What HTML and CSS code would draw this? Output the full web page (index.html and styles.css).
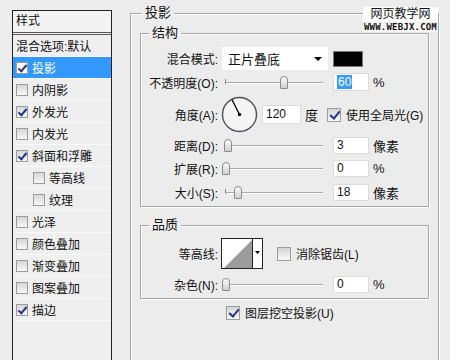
FILE: index.html
```html
<!DOCTYPE html>
<html lang="zh-CN">
<head>
<meta charset="UTF-8" />
<title>图层样式 - 投影</title>
<link rel="stylesheet" href="styles.css">
</head>
<body>

<div class="dialog">
  <!-- Style list -->
  <div class="styles">
    <div class="styles-head">样式</div>
    <ul class="style-list">
      <li>混合选项:默认</li>
      <li class="active"><span class="cb on"></span>投影</li>
      <li><span class="cb"></span>内阴影</li>
      <li><span class="cb on"></span>外发光</li>
      <li><span class="cb"></span>内发光</li>
      <li><span class="cb on"></span>斜面和浮雕</li>
      <li class="sub"><span class="cb"></span>等高线</li>
      <li class="sub"><span class="cb"></span>纹理</li>
      <li><span class="cb"></span>光泽</li>
      <li><span class="cb"></span>颜色叠加</li>
      <li><span class="cb"></span>渐变叠加</li>
      <li><span class="cb"></span>图案叠加</li>
      <li><span class="cb on"></span>描边</li>
    </ul>
  </div>

  <!-- Drop shadow settings -->
  <fieldset class="group">
    <legend>投影</legend>

    <fieldset class="box">
      <legend>结构</legend>
      <div class="row r-blend">
        <span class="lbl">混合模式:</span>
        <div class="select">正片叠底<span class="arrow"></span></div>
        <span class="swatch"></span>
      </div>
      <div class="row r-opacity">
        <span class="lbl">不透明度(O):</span>
        <div class="slider"><span class="thumb" style="left:59px"></span></div>
        <span class="num tall"><span class="sel">60</span></span>
        <span class="unit">%</span>
      </div>
      <div class="row r-angle">
        <span class="lbl">角度(A):</span>
        <svg class="dial" width="37" height="37" viewBox="0 0 37 37">
          <circle cx="18.5" cy="18.5" r="17" fill="#f5f5f7" stroke="#50505c" stroke-width="1.4"/>
          <line x1="18.5" y1="18.5" x2="11" y2="3.6" stroke="#000" stroke-width="1.3"/>
          <circle cx="18.5" cy="18.5" r="1.7" fill="#000"/>
        </svg>
        <span class="num angle">120</span>
        <span class="unit">度</span>
        <span class="cb big on global"></span>
        <span class="cb-text">使用全局光(G)</span>
      </div>
      <div class="row r-dist">
        <span class="lbl">距离(D):</span>
        <div class="slider"><span class="thumb" style="left:3px"></span></div>
        <span class="num">3</span>
        <span class="unit">像素</span>
      </div>
      <div class="row r-spread">
        <span class="lbl">扩展(R):</span>
        <div class="slider"><span class="thumb" style="left:1px"></span></div>
        <span class="num">0</span>
        <span class="unit">%</span>
      </div>
      <div class="row r-size">
        <span class="lbl">大小(S):</span>
        <div class="slider"><span class="thumb" style="left:13px"></span></div>
        <span class="num">18</span>
        <span class="unit">像素</span>
      </div>
    </fieldset>

    <fieldset class="box quality">
      <legend>品质</legend>
      <div class="row r-contour">
        <span class="lbl">等高线:</span>
        <svg class="contour" width="42" height="31" viewBox="0 0 42 31">
          <rect x="0.5" y="0.5" width="41" height="30" fill="#fff" stroke="#222"/>
          <polygon points="3,30 31,2 31,30" fill="#9c9c9c"/>
          <line x1="31.5" y1="0" x2="31.5" y2="31" stroke="#222"/>
          <polygon points="34,13 39,13 36.5,16" fill="#000"/>
        </svg>
        <span class="cb big aa"></span>
        <span class="cb-text">消除锯齿(L)</span>
      </div>
      <div class="row r-noise">
        <span class="lbl">杂色(N):</span>
        <div class="slider"><span class="thumb" style="left:1px"></span></div>
        <span class="num">0</span>
        <span class="unit">%</span>
      </div>
    </fieldset>

    <div class="knockout">
      <span class="cb big on"></span>
      <span class="cb-text">图层挖空投影(U)</span>
    </div>
  </fieldset>

  <!-- Watermark -->
  <div class="mark">
    <div class="mark-cn">网页教学网</div>
    <div class="mark-en">WWW.WEBJX.COM</div>
  </div>
</div>

</body>
</html>
```

FILE: styles.css
```css
:root {
  --line: #a6a6a6;
  --bg: #ececec;
}
body {
  margin: 0;
  background: var(--bg);
  font-family: "Liberation Sans", "Noto Sans CJK SC", sans-serif;
  font-size: 12px;
  color: #111;
}
.dialog {
  position: relative;
  display: flex;
  align-items: flex-start;
  height: 360px;
  overflow: hidden;
}

/* left style list */
.styles {
  margin: 10px 0 0 12px;
  width: 98px;
  height: 400px;
  border: 1px solid #222;
  background: #efefef;
  flex: none;
}
.styles-head {
  height: 21px;
  line-height: 21px;
  padding-left: 3px;
  background: #f3f3f3;
  border-bottom: 3px double #555;
}
.style-list {
  list-style: none;
  margin: 0;
  padding: 0;
}
.style-list li {
  display: flex;
  align-items: center;
  height: 21px;
  padding-left: 3px;
  border-bottom: 1px solid #fafafa;
  white-space: nowrap;
}
.style-list li.sub {
  padding-left: 20px;
}
.style-list li.active {
  background: #3399ff;
  color: #fff;
}

/* checkboxes */
.cb {
  position: relative;
  flex: none;
  width: 10px;
  height: 10px;
  margin-right: 4px;
  border: 1px solid #9c9c9c;
  background: linear-gradient(#d6d6d6, #f8f8f8);
}
.active .cb {
  background: #fff;
}
.cb.on::after {
  content: "";
  position: absolute;
  left: 3px;
  top: 0;
  width: 3px;
  height: 7px;
  border: solid #25338a;
  border-width: 0 2px 2px 0;
  transform: rotate(40deg);
}
.cb.big {
  width: 12px;
  height: 12px;
  margin-right: 5px;
}
.cb.big.on::after {
  left: 4px;
  top: 0;
  width: 4px;
  height: 8px;
}
.cb-text {
  white-space: nowrap;
}

/* group boxes */
.group {
  margin: 5px 0 0 18px;
  padding: 4px 9px 0 9px;
  width: 289px;
  height: 420px;
  min-width: 0;
  border: 1px solid var(--line);
  box-shadow: inset 1px 1px 0 #fff, 1px 1px 0 #fff;
  flex: none;
}
.group > legend {
  margin-left: 2px;
  padding: 0 3px;
  line-height: 16px;
  font-size: 13px;
}
.box {
  margin: 0;
  padding: 0 0 5px 0;
  min-width: 0;
  border: 1px solid var(--line);
  box-shadow: inset 1px 1px 0 #fff, 1px 1px 0 #fff;
}
.box > legend {
  margin-left: 8px;
  padding: 0 3px;
  line-height: 16px;
  font-size: 13px;
}
.quality {
  margin-top: 10px;
}

/* rows */
.row {
  display: flex;
  align-items: center;
  white-space: nowrap;
}
.lbl {
  flex: none;
  width: 77px;
  margin-right: 4px;
  text-align: right;
}
.r-blend { height: 23px; margin-top: 6px; }
.r-opacity { height: 18px; margin-top: 3px; }
.r-angle { height: 37px; margin-top: 5px; }
.r-dist { height: 17px; margin-top: 4px; }
.r-spread { height: 17px; margin-top: 6px; }
.r-size { height: 17px; margin-top: 7px; }
.r-contour { height: 31px; margin-top: 5px; }
.r-noise { height: 17px; margin-top: 7px; }

.select {
  box-sizing: border-box;
  display: flex;
  align-items: center;
  justify-content: space-between;
  width: 106px;
  height: 23px;
  padding-left: 6px;
  background: #fff;
  font-size: 13px;
}
.arrow {
  margin-right: 6px;
  border-left: 4px solid transparent;
  border-right: 4px solid transparent;
  border-top: 4px solid #000;
}
.swatch {
  width: 28px;
  height: 14px;
  margin-left: 5px;
  background: #000;
  border: 1px solid #7a7a7a;
}

/* sliders */
.slider {
  position: relative;
  flex: none;
  width: 98px;
  height: 17px;
  margin-left: 3px;
}
.slider::before {
  content: "";
  position: absolute;
  left: 0;
  right: 0;
  top: 8px;
  height: 1px;
  background: #a9a9a9;
  box-shadow: 0 1px 0 #fff;
}
.slider::after {
  content: "";
  position: absolute;
  left: 0;
  top: 5px;
  width: 1px;
  height: 5px;
  background: #8a8a8a;
}
.thumb {
  position: absolute;
  z-index: 1;
  top: 2px;
  width: 6px;
  height: 11px;
  margin-left: -4px;
  border: 1px solid #8a8a8a;
  border-radius: 4px 4px 1px 1px;
  background: linear-gradient(#fdfdfd, #cfcfcf);
}

/* number fields */
.num {
  box-sizing: border-box;
  flex: none;
  width: 36px;
  height: 17px;
  margin-left: 10px;
  padding-left: 3px;
  line-height: 15px;
  font-size: 12px;
  background: #fff;
  border: 1px solid #dcdcdc;
}
.num.tall {
  height: 18px;
  line-height: 16px;
}
.num .sel {
  background: #3399ff;
  color: #fff;
  padding: 0 1px;
}
.num.angle {
  width: 39px;
  height: 19px;
  line-height: 17px;
  margin-left: 4px;
}
.unit {
  margin-left: 4px;
  font-size: 13px;
}
.dial {
  flex: none;
  margin-left: -1px;
}
.global {
  margin-left: 9px;
}
.contour {
  flex: none;
  margin-left: -1px;
}
.aa {
  margin-left: 14px;
}

.knockout {
  display: flex;
  align-items: center;
  height: 15px;
  margin-top: 6px;
  padding-left: 86px;
}

/* watermark over the corner */
.mark {
  position: absolute;
  top: 7px;
  right: 12px;
  text-align: center;
}
.mark-cn {
  padding: 0 4px;
  background: #fff;
  font-size: 12px;
  line-height: 15px;
}
.mark-en {
  margin-top: 1px;
  padding: 0 1px;
  background: #f8f8f8;
  font-family: "DejaVu Sans Mono", monospace;
  font-weight: bold;
  font-size: 9px;
  line-height: 9px;
  letter-spacing: 0.2px;
}
```
